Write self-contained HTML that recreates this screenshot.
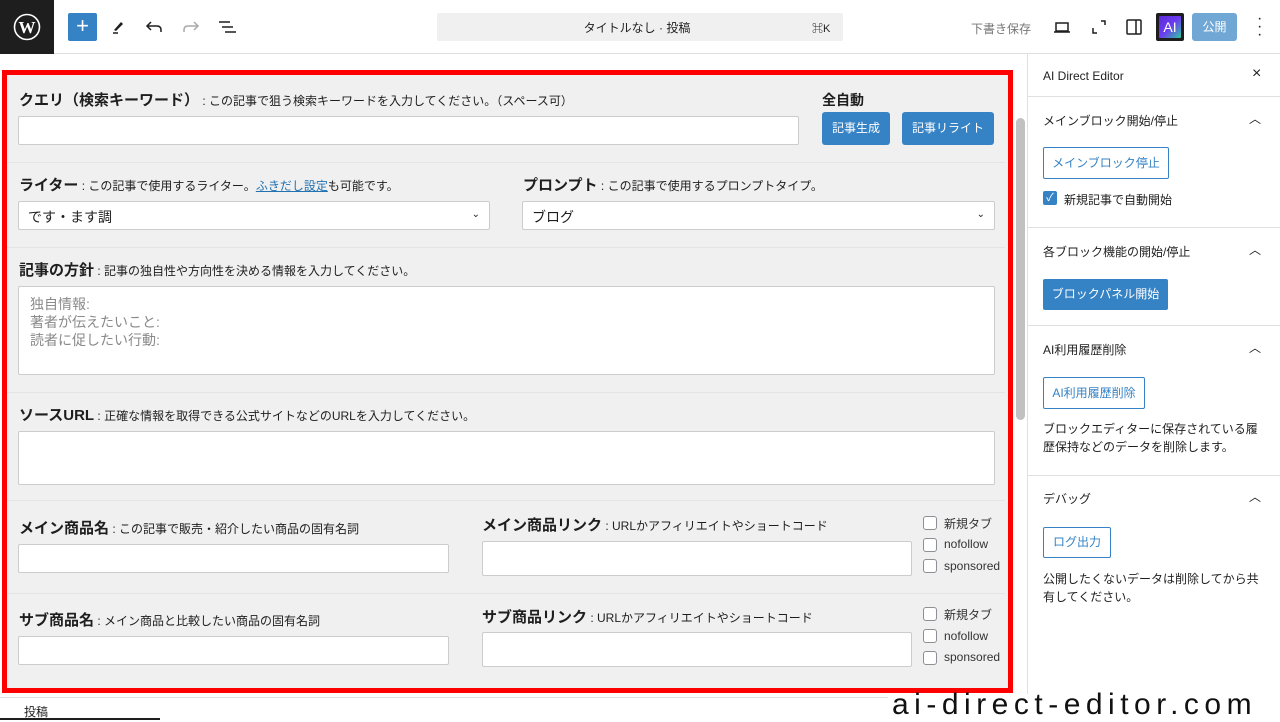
<!DOCTYPE html>
<html><head><meta charset="utf-8"><style>
*{box-sizing:border-box;margin:0;padding:0}
body{width:1280px;height:720px;overflow:hidden;background:#fff;font-family:"Liberation Sans","Noto Sans CJK JP",sans-serif;color:#1e1e1e;position:relative}
.a{position:absolute}
.top{left:0;top:0;width:1280px;height:54px;border-bottom:1px solid #e0e0e0;background:#fff}
.lbl{font-size:12px;color:#1e1e1e;white-space:nowrap}
.lbl b{font-size:15px;font-weight:bold}
.in{background:#fff;border:1px solid #ccc;border-radius:2px}
.sep{left:7px;width:998px;height:1px;background:#e4e4e4}
.btn{background:#3582c4;color:#fff;font-size:12px;text-align:center;border-radius:3px}
.obtn{border:1px solid #3582c4;color:#3582c4;font-size:12px;text-align:center;border-radius:2px;background:#fff}
.cb{width:14px;height:14px;border:1px solid #8c8f94;border-radius:3px;background:#fff}
.cbl{font-size:12px;color:#333}
.ps{font-size:12px;color:#1e1e1e}
.hr{left:1028px;width:252px;height:1px;background:#e0e0e0}
.chev{font-size:12px}
</style></head><body>
<div class="a top"></div>
<div class="a" style="left:0;top:0;width:54px;height:54px;background:#1e1e1e"></div>
<svg class="a" style="left:13px;top:13px" width="28" height="28" viewBox="0 0 28 28"><circle cx="14" cy="14" r="12.5" fill="none" stroke="#fff" stroke-width="1.6"/><text x="14" y="20" text-anchor="middle" font-family="Liberation Serif" font-weight="bold" font-size="17" fill="#fff">W</text></svg>
<div class="a" style="left:68px;top:13px;width:29px;height:28px;background:#3582c4;border-radius:2px;color:#fff;font-size:22px;line-height:26px;text-align:center">+</div>
<svg class="a" style="left:110px;top:18px" width="18" height="18" viewBox="0 0 18 18"><path d="M4 12 L11 4 L13 6 L6 13 Z" fill="#1e1e1e"/><path d="M3 15h5" stroke="#1e1e1e" stroke-width="1.5"/></svg>
<svg class="a" style="left:145px;top:18px" width="18" height="18" viewBox="0 0 18 18"><path d="M6 4 L2 8 L6 12 M2 8 H12 Q16 8 16 12 V14" fill="none" stroke="#1e1e1e" stroke-width="1.5"/></svg>
<svg class="a" style="left:182px;top:18px" width="18" height="18" viewBox="0 0 18 18"><path d="M12 4 L16 8 L12 12 M16 8 H6 Q2 8 2 12 V14" fill="none" stroke="#aaa" stroke-width="1.5"/></svg>
<svg class="a" style="left:218px;top:18px" width="20" height="18" viewBox="0 0 20 18"><path d="M1 4h11M4 9h11M7 14h11" stroke="#1e1e1e" stroke-width="1.6"/></svg>
<div class="a" style="left:437px;top:13px;width:406px;height:28px;background:#f0f0f0;border-radius:2px"></div>
<div class="a" style="top:19px;width:490px;text-align:center;font-size:12px;color:#1e1e1e;left:392px">タイトルなし · 投稿</div>
<div class="a" style="left:812px;top:20px;font-size:11px">⌘K</div>
<div class="a" style="left:971px;top:20px;font-size:12px;color:#757575">下書き保存</div>
<svg class="a" style="left:1053px;top:18px" width="18" height="18" viewBox="0 0 18 18"><path d="M3 5h12v8H3z M1 14h16" fill="none" stroke="#1e1e1e" stroke-width="1.5"/></svg>
<svg class="a" style="left:1090px;top:18px" width="18" height="18" viewBox="0 0 18 18"><path d="M3 10v5h4 M11 3h4v4" fill="none" stroke="#1e1e1e" stroke-width="1.5"/></svg>
<svg class="a" style="left:1125px;top:18px" width="18" height="18" viewBox="0 0 18 18"><rect x="2" y="2" width="14" height="14" rx="1" fill="none" stroke="#1e1e1e" stroke-width="1.5"/><path d="M11 2v14" stroke="#1e1e1e" stroke-width="1.5"/></svg>
<div class="a" style="left:1156px;top:13px;width:28px;height:28px;background:#1e1e1e;border-radius:2px"></div>
<div class="a" style="left:1159px;top:16px;width:22px;height:22px;background:linear-gradient(135deg,#5b2bd8,#6b3cf0 50%,#2fc9a0);border-radius:1px;color:#fff;font-size:14px;text-align:center;line-height:22px">AI</div>
<div class="a btn" style="left:1192px;top:13px;width:45px;height:28px;line-height:28px;opacity:.7">公開</div>
<div class="a" style="left:1257px;top:15px;font-size:16px;line-height:8px">·<br>·<br>·</div>

<div class="a" style="left:2px;top:70px;width:1011px;height:623px;border:5px solid #f00;background:#f0f0f0"></div>
<div class="a" style="left:1016px;top:118px;width:9px;height:302px;background:#c1c1c1;border-radius:5px"></div>
<div class="a" style="left:1027px;top:54px;width:1px;height:666px;background:#e0e0e0"></div>

<div class="a lbl" style="left:19px;top:89px"><b>クエリ（検索キーワード）</b> : この記事で狙う検索キーワードを入力してください。（スペース可）</div>
<div class="a in" style="left:18px;top:116px;width:781px;height:29px"></div>
<div class="a" style="left:822px;top:90px;font-size:14px;font-weight:bold">全自動</div>
<div class="a btn" style="left:822px;top:112px;width:68px;height:33px;line-height:33px">記事生成</div>
<div class="a btn" style="left:902px;top:112px;width:92px;height:33px;line-height:33px">記事リライト</div>
<div class="a sep" style="top:162px"></div>

<div class="a lbl" style="left:19px;top:174px"><b>ライター</b> : この記事で使用するライター。<span style="color:#2271b1;text-decoration:underline">ふきだし設定</span>も可能です。</div>
<div class="a in" style="left:18px;top:201px;width:472px;height:29px;font-size:14px;padding:5px 9px">です・ます調<span style="float:right;font-size:10px;margin-top:2px">⌄</span></div>
<div class="a lbl" style="left:523px;top:174px"><b>プロンプト</b> : この記事で使用するプロンプトタイプ。</div>
<div class="a in" style="left:522px;top:201px;width:473px;height:29px;font-size:14px;padding:5px 9px">ブログ<span style="float:right;font-size:10px;margin-top:2px">⌄</span></div>
<div class="a sep" style="top:247px"></div>

<div class="a lbl" style="left:19px;top:259px"><b>記事の方針</b> : 記事の独自性や方向性を決める情報を入力してください。</div>
<div class="a in" style="left:18px;top:286px;width:977px;height:89px;font-size:14px;color:#8a8a8a;padding:8px 11px;line-height:18px">独自情報:<br>著者が伝えたいこと:<br>読者に促したい行動:</div>
<div class="a sep" style="top:392px"></div>

<div class="a lbl" style="left:19px;top:404px"><b>ソースURL</b> : 正確な情報を取得できる公式サイトなどのURLを入力してください。</div>
<div class="a in" style="left:18px;top:431px;width:977px;height:54px"></div>
<div class="a sep" style="top:500px"></div>

<div class="a lbl" style="left:19px;top:517px"><b>メイン商品名</b> : この記事で販売・紹介したい商品の固有名詞</div>
<div class="a in" style="left:18px;top:544px;width:431px;height:29px"></div>
<div class="a lbl" style="left:482px;top:514px"><b>メイン商品リンク</b> : URLかアフィリエイトやショートコード</div>
<div class="a in" style="left:482px;top:541px;width:430px;height:35px"></div>
<div class="a cb" style="left:923px;top:516px"></div><div class="a cbl" style="left:944px;top:515px">新規タブ</div>
<div class="a cb" style="left:923px;top:538px"></div><div class="a cbl" style="left:944px;top:537px">nofollow</div>
<div class="a cb" style="left:923px;top:559px"></div><div class="a cbl" style="left:944px;top:559px">sponsored</div>
<div class="a sep" style="top:593px"></div>

<div class="a lbl" style="left:19px;top:609px"><b>サブ商品名</b> : メイン商品と比較したい商品の固有名詞</div>
<div class="a in" style="left:18px;top:636px;width:431px;height:29px"></div>
<div class="a lbl" style="left:482px;top:606px"><b>サブ商品リンク</b> : URLかアフィリエイトやショートコード</div>
<div class="a in" style="left:482px;top:632px;width:430px;height:35px"></div>
<div class="a cb" style="left:923px;top:607px"></div><div class="a cbl" style="left:944px;top:606px">新規タブ</div>
<div class="a cb" style="left:923px;top:629px"></div><div class="a cbl" style="left:944px;top:629px">nofollow</div>
<div class="a cb" style="left:923px;top:651px"></div><div class="a cbl" style="left:944px;top:650px">sponsored</div>

<div class="a" style="left:0;top:697px;width:1027px;height:1px;background:#e0e0e0"></div>
<div class="a" style="left:24px;top:703px;font-size:12px">投稿</div>
<div class="a" style="left:0;top:718px;width:160px;height:2px;background:#1e1e1e"></div>
<div class="a" style="left:888px;top:694px;width:392px;height:26px;background:#fff"></div>
<div class="a" style="left:892px;top:688px;font-size:30px;letter-spacing:5.5px;color:#111;line-height:34px;white-space:nowrap">ai-direct-editor.com</div>

<div class="a" style="left:1043px;top:69px;font-size:12px">AI Direct Editor</div>
<div class="a" style="left:1252px;top:65px;font-size:16px">×</div>
<div class="a hr" style="top:96px"></div>
<div class="a ps" style="left:1043px;top:112px">メインブロック開始/停止</div><div class="a chev" style="left:1249px;top:110px">︿</div>
<div class="a obtn" style="left:1043px;top:147px;width:126px;height:32px;line-height:30px">メインブロック停止</div>
<div class="a" style="left:1043px;top:191px;width:14px;height:14px;background:#3582c4;border-radius:2px;color:#fff;font-size:11px;text-align:center;line-height:14px">✓</div>
<div class="a ps" style="left:1064px;top:191px">新規記事で自動開始</div>
<div class="a hr" style="top:227px"></div>
<div class="a ps" style="left:1043px;top:243px">各ブロック機能の開始/停止</div><div class="a chev" style="left:1249px;top:241px">︿</div>
<div class="a btn" style="left:1043px;top:279px;width:125px;height:31px;line-height:31px;border-radius:2px">ブロックパネル開始</div>
<div class="a hr" style="top:325px"></div>
<div class="a ps" style="left:1043px;top:341px">AI利用履歴削除</div><div class="a chev" style="left:1249px;top:339px">︿</div>
<div class="a obtn" style="left:1043px;top:377px;width:102px;height:32px;line-height:30px">AI利用履歴削除</div>
<div class="a ps" style="left:1043px;top:420px;width:225px;line-height:18px">ブロックエディターに保存されている履歴保持などのデータを削除します。</div>
<div class="a hr" style="top:475px"></div>
<div class="a ps" style="left:1043px;top:490px">デバッグ</div><div class="a chev" style="left:1249px;top:488px">︿</div>
<div class="a obtn" style="left:1043px;top:527px;width:68px;height:31px;line-height:29px">ログ出力</div>
<div class="a ps" style="left:1043px;top:570px;width:225px;line-height:18px">公開したくないデータは削除してから共有してください。</div>
</body></html>
